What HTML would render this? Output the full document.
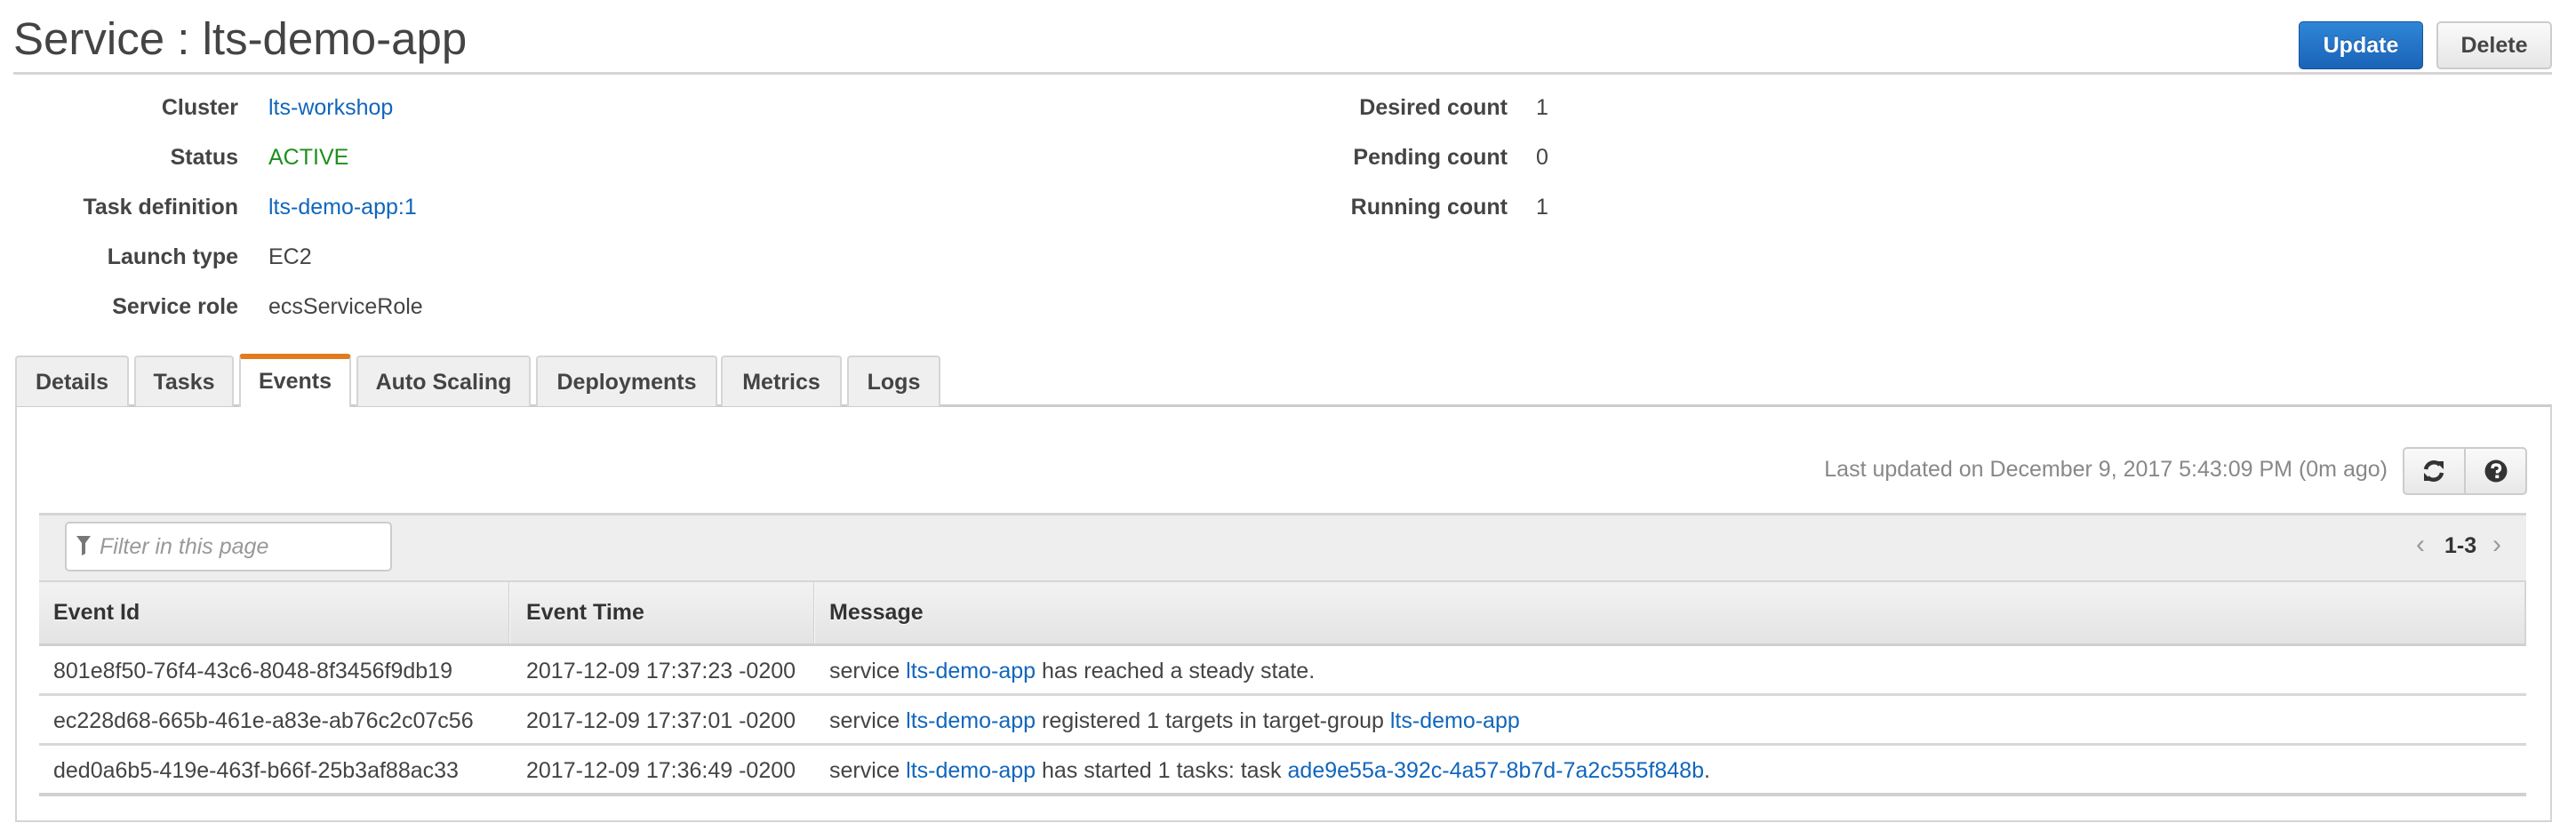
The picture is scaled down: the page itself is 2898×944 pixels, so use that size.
<!DOCTYPE html>
<html><head><meta charset="utf-8"><style>
*{box-sizing:border-box;margin:0;padding:0}
body{width:2898px;height:944px;background:#fff;font-family:"Liberation Sans",Arial,sans-serif;color:#444;position:relative;overflow:hidden}
.a{position:absolute;white-space:nowrap}
a{color:#1166bb;text-decoration:none}
.lbl{font-weight:bold;font-size:25px;text-align:right;width:260px;left:8px;color:#444}
.val{font-size:25px;left:302px}
.lbl2{font-weight:bold;font-size:25px;text-align:right;width:400px;left:1296px}
.val2{font-size:25px;left:1728px}
.tab{position:absolute;top:400px;height:57px;background:#efefef;border:2px solid #d5d5d5;border-bottom:none;border-radius:4px 4px 0 0;font-weight:bold;font-size:25px;color:#444;text-align:center;line-height:56px}
.tab.act{background:#fff;border-top:6px solid #e07b1e;line-height:50px;height:60px}
.btn{position:absolute;border-radius:5px;font-weight:bold;font-size:25px;text-align:center}
.row{position:absolute;left:44px;width:2798px;height:56px;border-bottom:3px solid #d8d8d8;font-size:25px;color:#444}
.row span.c{position:absolute;top:14px}
</style></head><body>
<div class="a" style="left:15px;top:14px;font-size:51px;color:#444">Service : lts-demo-app</div>
<div class="a" style="left:15px;top:81px;width:2856px;height:3px;background:#d5d5d5"></div>
<div class="btn" style="left:2586px;top:24px;width:140px;height:54px;background:linear-gradient(#2f86d6,#1a63b8);border:1px solid #15529a;color:#fff;line-height:52px;text-shadow:0 -1px 0 #124a8a">Update</div>
<div class="btn" style="left:2741px;top:24px;width:130px;height:54px;background:linear-gradient(#fafafa,#e6e6e6);border:2px solid #ccc;color:#444;line-height:50px">Delete</div>

<div class="a lbl" style="top:107px">Cluster</div><div class="a val" style="top:107px"><a>lts-workshop</a></div>
<div class="a lbl" style="top:163px">Status</div><div class="a val" style="top:163px;color:#1d8f1d">ACTIVE</div>
<div class="a lbl" style="top:219px">Task definition</div><div class="a val" style="top:219px"><a>lts-demo-app:1</a></div>
<div class="a lbl" style="top:275px">Launch type</div><div class="a val" style="top:275px">EC2</div>
<div class="a lbl" style="top:331px">Service role</div><div class="a val" style="top:331px">ecsServiceRole</div>
<div class="a lbl2" style="top:107px">Desired count</div><div class="a val2" style="top:107px">1</div>
<div class="a lbl2" style="top:163px">Pending count</div><div class="a val2" style="top:163px">0</div>
<div class="a lbl2" style="top:219px">Running count</div><div class="a val2" style="top:219px">1</div>

<div class="a" style="left:17px;top:455px;width:2854px;height:470px;border:2px solid #d5d5d5;border-top:3px solid #ccc"></div>
<div class="tab" style="left:17px;width:128px">Details</div>
<div class="tab" style="left:151px;width:112px">Tasks</div>
<div class="tab act" style="left:269px;width:126px;top:398px">Events</div>
<div class="tab" style="left:401px;width:196px">Auto Scaling</div>
<div class="tab" style="left:603px;width:204px">Deployments</div>
<div class="tab" style="left:811px;width:136px">Metrics</div>
<div class="tab" style="left:953px;width:105px">Logs</div>

<div class="a" style="right:212px;top:514px;font-size:25px;color:#888">Last updated on December 9, 2017 5:43:09 PM (0m ago)</div>
<div class="a" style="left:2703px;top:503px;width:140px;height:54px;border:2px solid #ccc;border-radius:5px;background:linear-gradient(#fafafa,#e8e8e8)"></div>
<div class="a" style="left:2772px;top:505px;width:2px;height:50px;background:#ccc"></div>
<svg class="a" style="left:2725px;top:517px" width="26" height="26" viewBox="0 0 26 26"><path d="M4 11 A9.5 9.5 0 0 1 20 6" fill="none" stroke="#333" stroke-width="4.5"/><path d="M15 2 L24 2 L24 11 Z" fill="#333"/><path d="M22 15 A9.5 9.5 0 0 1 6 20" fill="none" stroke="#333" stroke-width="4.5"/><path d="M11 24 L2 24 L2 15 Z" fill="#333"/></svg>
<svg class="a" style="left:2795px;top:517px" width="26" height="26" viewBox="0 0 26 26"><circle cx="13" cy="13" r="12.5" fill="#333"/><path d="M9 10 Q9 6 13 6 Q17.5 6 17.5 10 Q17.5 12.5 14.5 13.5 L14.5 15.5" fill="none" stroke="#fff" stroke-width="3.4"/><rect x="12.3" y="17.5" width="4" height="3.6" fill="#fff"/></svg>

<div class="a" style="left:44px;top:577px;width:2798px;height:76px;background:#eee;border-top:3px solid #d5d5d5"></div>
<div class="a" style="left:73px;top:587px;width:368px;height:56px;background:#fff;border:2px solid #ccc;border-radius:5px"></div>
<svg class="a" style="left:86px;top:603px" width="16" height="22" viewBox="0 0 16 22"><path d="M0 0 H16 L10 8 V20 L6 22 V8 Z" fill="#777"/></svg>
<div class="a" style="left:112px;top:601px;font-size:25px;font-style:italic;color:#999">Filter in this page</div>
<div class="a" style="left:2718px;top:596px;font-size:30px;color:#999">‹</div>
<div class="a" style="left:2750px;top:600px;font-size:25px;font-weight:bold;color:#333">1-3</div>
<div class="a" style="left:2804px;top:596px;font-size:30px;color:#999">›</div>

<div class="a" style="left:44px;top:653px;width:2798px;height:74px;background:linear-gradient(#f2f2f2,#e4e4e4);border-top:2px solid #d5d5d5;border-bottom:3px solid #d0d0d0;border-right:2px solid #d5d5d5"></div>
<div class="a" style="left:572px;top:655px;width:2px;height:69px;background:#f8f8f8;border-left:1px solid #d0d0d0"></div>
<div class="a" style="left:915px;top:655px;width:2px;height:69px;background:#f8f8f8;border-left:1px solid #d0d0d0"></div>
<div class="a" style="left:60px;top:675px;font-size:25px;font-weight:bold;color:#333;text-shadow:0 1px 0 #fff">Event Id</div>
<div class="a" style="left:592px;top:675px;font-size:25px;font-weight:bold;color:#333;text-shadow:0 1px 0 #fff">Event Time</div>
<div class="a" style="left:933px;top:675px;font-size:25px;font-weight:bold;color:#333;text-shadow:0 1px 0 #fff">Message</div>

<div class="row" style="top:727px"><span class="c" style="left:16px">801e8f50-76f4-43c6-8048-8f3456f9db19</span><span class="c" style="left:548px">2017-12-09 17:37:23 -0200</span><span class="c" style="left:889px">service <a>lts-demo-app</a> has reached a steady state.</span></div>
<div class="row" style="top:783px"><span class="c" style="left:16px">ec228d68-665b-461e-a83e-ab76c2c07c56</span><span class="c" style="left:548px">2017-12-09 17:37:01 -0200</span><span class="c" style="left:889px">service <a>lts-demo-app</a> registered 1 targets in target-group <a>lts-demo-app</a></span></div>
<div class="row" style="top:839px;height:57px;border-bottom:4px solid #d0d0d0"><span class="c" style="left:16px">ded0a6b5-419e-463f-b66f-25b3af88ac33</span><span class="c" style="left:548px">2017-12-09 17:36:49 -0200</span><span class="c" style="left:889px">service <a>lts-demo-app</a> has started 1 tasks: task <a>ade9e55a-392c-4a57-8b7d-7a2c555f848b</a>.</span></div>
</body></html>
